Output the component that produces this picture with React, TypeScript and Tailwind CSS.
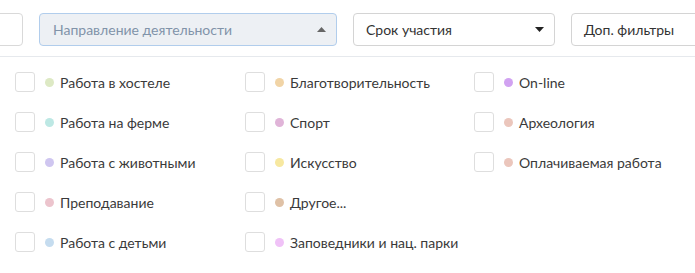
const items: { label: string; color: string }[] = [
  { label: 'Работа в хостеле', color: '#dde9c4' },
  { label: 'Работа на ферме', color: '#bde8e4' },
  { label: 'Работа с животными', color: '#cfc6f0' },
  { label: 'Преподавание', color: '#ecc4cd' },
  { label: 'Работа с детьми', color: '#c5dcef' },
  { label: 'Благотворительность', color: '#f1d4a6' },
  { label: 'Спорт', color: '#e0b4d8' },
  { label: 'Искусство', color: '#f7e8a0' },
  { label: 'Другое...', color: '#dfc1a6' },
  { label: 'Заповедники и нац. парки', color: '#f0c2f7' },
  { label: 'On-line', color: '#d1a2f1' },
  { label: 'Археология', color: '#ebc6bc' },
  { label: 'Оплачиваемая работа', color: '#ebc6bc' },
];

function Caret({ up }: { up?: boolean }) {
  return (
    <svg width="9" height="5" viewBox="0 0 9 5" className="shrink-0">
      {up ? (
        <path d="M0 5 L4.5 0 L9 5 Z" fill="#666" />
      ) : (
        <path d="M0 0 L4.5 5 L9 0 Z" fill="#222" />
      )}
    </svg>
  );
}

export default function App() {
  return (
    <div className="h-[273px] w-[695px] overflow-hidden bg-white font-['Lato',sans-serif] text-[14px]">
      {/* Фильтры */}
      <div className="flex h-[57px] items-start gap-4 border-b border-[#e6e9ed] pt-[13px]">
        <div className="ml-[-77px] h-[33px] w-[100px] shrink-0 rounded border border-[#d9d9d9]" />
        <div className="flex h-[33px] w-[298px] shrink-0 items-center justify-between rounded border border-[#b1cdec] bg-[#edf0f4] pl-[13px] pr-[10px] text-[#8193a9]">
          <span>Направление деятельности</span>
          <Caret up />
        </div>
        <div className="flex h-[33px] w-[202px] shrink-0 items-center justify-between rounded border border-[#d4d4d4] pl-[12px] pr-[10px] text-[#333]">
          <span>Срок участия</span>
          <Caret />
        </div>
        <div className="flex h-[33px] w-[160px] shrink-0 items-center rounded border border-[#d4d4d4] pl-[12px] text-[#333]">
          <span>Доп. фильтры</span>
        </div>
      </div>

      {/* Чекбоксы */}
      <div className="grid grid-flow-col grid-cols-[230px_229px_1fr] grid-rows-[repeat(5,40px)] pl-[15px] pt-[5px]">
        {items.map((it) => (
          <label key={it.label} className="flex items-center text-[#3a3a3a]">
            <span className="h-[20px] w-[20px] shrink-0 rounded-[3px] border border-[#dedede] bg-white" />
            <span
              className="ml-[10px] h-[9px] w-[9px] shrink-0 rounded-full"
              style={{ backgroundColor: it.color }}
            />
            <span className="ml-[6px] whitespace-nowrap">{it.label}</span>
          </label>
        ))}
      </div>
    </div>
  );
}
